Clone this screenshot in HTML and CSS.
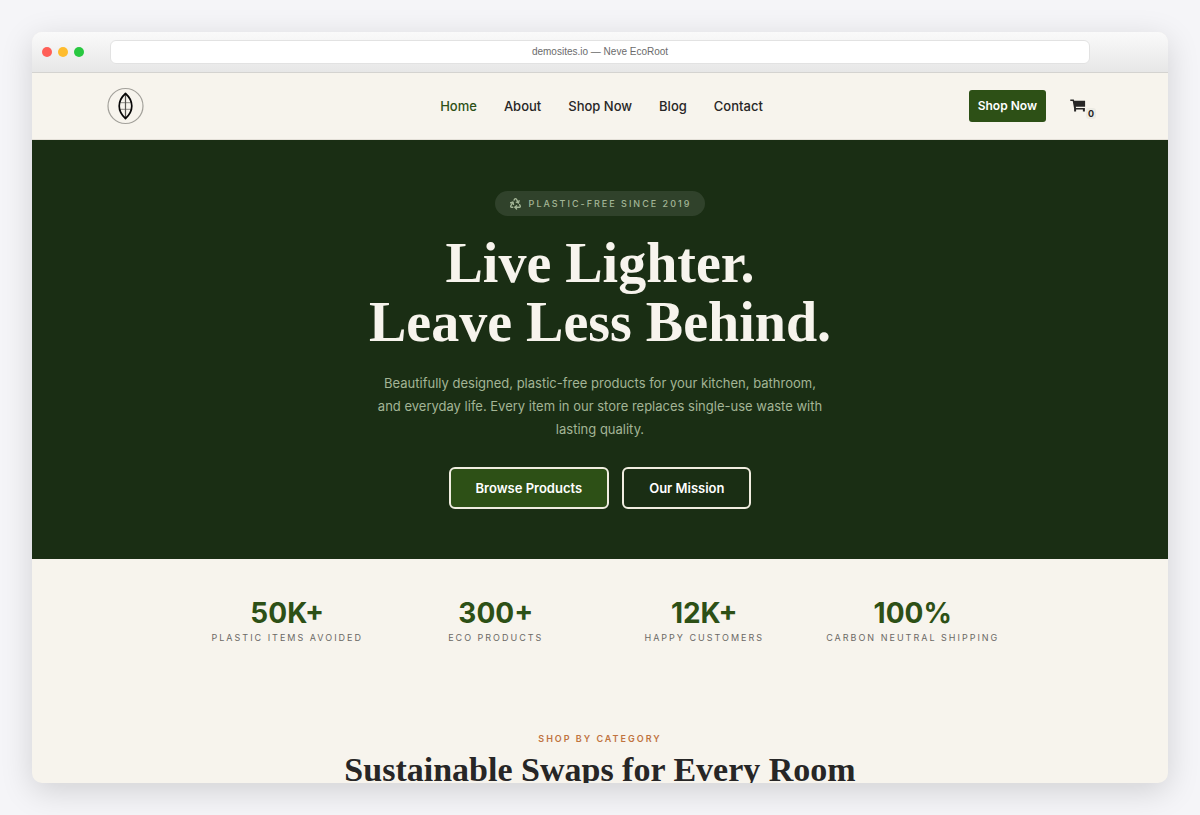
FILE: index.html
```
<!DOCTYPE html>
<html lang="en">
<head>
    <meta charset="UTF-8">
    <meta name="viewport" content="width=device-width, initial-scale=1.0">
    <title>Neve EcoRoot</title>
    <link rel="stylesheet" href="styles.css">
</head>
<body>

    <div class="browser">
        <!-- Browser bar -->
        <div class="toolbar">
            <div class="dots">
                <span class="dot red"></span>
                <span class="dot yellow"></span>
                <span class="dot green"></span>
            </div>
            <div class="address">demosites.io — Neve EcoRoot</div>
        </div>

        <!-- Header -->
        <header>
            <a class="logo" href="#" aria-label="EcoRoot home">
                <svg width="38" height="38" viewBox="0 0 38 38" fill="none">
                    <circle cx="18.500" cy="19" r="17.500" stroke="#a3a19b" stroke-width="1.2"/>
                    <path d="M12.500 15.700h12M12.500 22.300h12" stroke="#8b8983" stroke-width="1"/>
                    <path d="M18.500 7v24" stroke="#55534f" stroke-width="1.2"/>
                    <path d="M18.500 6.500C10.100 14 10.100 24 18.500 31.500C26.900 24 26.900 14 18.500 6.500Z" stroke="#080808" stroke-width="1.7" stroke-linejoin="round"/>
                </svg>
            </a>
            <nav>
                <a class="active" href="#">Home</a>
                <a href="#">About</a>
                <a href="#">Shop Now</a>
                <a href="#">Blog</a>
                <a href="#">Contact</a>
            </nav>
            <div class="actions">
                <a class="shop-btn" href="#">Shop Now</a>
                <a class="cart" href="#" aria-label="Cart">
                    <svg width="16" height="16" viewBox="0 0 16 16" fill="#272626">
                        <path d="M0.300 1.500h3.500l0.400 1.200h10.900v6H5.800l0.200 1.300h8.900v3.600h-2v-2H6.100v2h-2v-3.200L2.700 3H0.300z"/>
                    </svg>
                    <span class="count">0</span>
                </a>
            </div>
        </header>

        <!-- Hero -->
        <section class="hero">
            <p class="badge">
                <svg width="13" height="13" viewBox="0 0 24 24" fill="none" stroke="#a3b596" stroke-width="2.500" stroke-linecap="round" stroke-linejoin="round">
                    <path d="M7 19H4.815a1.830 1.830 0 0 1-1.570-.881 1.785 1.785 0 0 1-.004-1.784L7.196 9.500"/>
                    <path d="M11 19h8.203a1.830 1.830 0 0 0 1.556-.890 1.784 1.784 0 0 0 0-1.775l-1.226-2.120"/>
                    <path d="m14 16-3 3 3 3"/>
                    <path d="M8.293 13.596 7.196 9.500 3.100 10.598"/>
                    <path d="m9.344 5.811 1.093-1.892A1.830 1.830 0 0 1 11.985 3a1.784 1.784 0 0 1 1.546.888l3.943 6.843"/>
                    <path d="m13.378 9.633 4.096 1.098 1.097-4.096"/>
                </svg>
                <span>Plastic-Free Since 2019</span>
            </p>
            <h1>Live Lighter.<br>Leave Less Behind.</h1>
            <p class="intro">Beautifully designed, plastic-free products for your kitchen, bathroom, and everyday life. Every item in our store replaces single-use waste with lasting quality.</p>
            <div class="buttons">
                <a class="btn filled" href="#">Browse Products</a>
                <a class="btn" href="#">Our Mission</a>
            </div>
        </section>

        <!-- Stats -->
        <section class="stats">
            <div class="stat">
                <strong>50K+</strong>
                <span>Plastic Items Avoided</span>
            </div>
            <div class="stat">
                <strong>300+</strong>
                <span>Eco Products</span>
            </div>
            <div class="stat">
                <strong>12K+</strong>
                <span>Happy Customers</span>
            </div>
            <div class="stat">
                <strong>100%</strong>
                <span>Carbon Neutral Shipping</span>
            </div>
        </section>

        <!-- Categories -->
        <section class="categories">
            <p class="label">Shop by Category</p>
            <h2>Sustainable Swaps for Every Room</h2>
        </section>
    </div>

</body>
</html>
```
FILE: styles.css
```
* {
    box-sizing: border-box;
}

body {
    margin: 0;
    height: 100vh;
    padding: 32px;
    background: #f5f5f8;
    font-family: Inter, 'Liberation Sans', sans-serif;
    color: #272626;
}

a {
    color: inherit;
    text-decoration: none;
}

h1, h2, p {
    margin: 0;
}

.browser {
    height: 100%;
    overflow: hidden;
    border-radius: 10px;
    background: #f7f4ed;
    box-shadow: 0 8px 32px rgba(0, 0, 0, 0.15);
}

/* Browser bar */
.toolbar {
    display: flex;
    align-items: center;
    height: 41px;
    padding: 0 78px 0 10px;
    background: linear-gradient(#fafafa, #e7e7e7);
    border-bottom: 1px solid #d4d3d0;
}

.dots {
    display: flex;
    gap: 6px;
    width: 68px;
}

.dot {
    width: 10px;
    height: 10px;
    border-radius: 50%;
}

.red {
    background: #ff5f57;
}

.yellow {
    background: #febc2e;
}

.green {
    background: #28c840;
}

.address {
    flex: 1;
    border: 1px solid #e2e2e2;
    border-radius: 6px;
    background: #fff;
    color: #6b6b6b;
    font-family: 'Liberation Sans', Arial, sans-serif;
    font-size: 10px;
    line-height: 22px;
    text-align: center;
}

/* Header */
header {
    display: grid;
    grid-template-columns: 1fr auto 1fr;
    align-items: center;
    height: 67px;
    padding: 0 72px 0 75px;
    border-bottom: 1px solid #e4e0d8;
}

.logo {
    display: flex;
}

nav {
    display: flex;
    gap: 27px;
    font-size: 13px;
    font-weight: 500;
    line-height: 20px;
}

.active {
    color: #2d5016;
}

.actions {
    display: flex;
    justify-content: flex-end;
    align-items: center;
    gap: 24px;
}

.shop-btn {
    padding: 0 9px;
    border-radius: 3px;
    background: #2d5016;
    color: #fff;
    font-size: 12px;
    font-weight: 600;
    line-height: 32px;
}

.cart {
    display: flex;
    align-items: center;
}

.count {
    width: 10px;
    margin-top: 14px;
    border-radius: 3px;
    background: #ecebe4;
    font-size: 9px;
    font-weight: 700;
    line-height: 11px;
    text-align: center;
}

/* Hero */
.hero {
    display: flex;
    flex-direction: column;
    align-items: center;
    padding: 51px 24px 50px;
    background: #1a2e14;
    text-align: center;
}

.badge {
    display: flex;
    align-items: center;
    gap: 7px;
    padding: 0 14px;
    border-radius: 13px;
    background: #30422b;
    color: #a3b596;
    font-size: 9px;
    font-weight: 500;
    letter-spacing: 2px;
    line-height: 25px;
    text-transform: uppercase;
}

h1, h2 {
    font-family: Georgia, 'Liberation Serif', serif;
    font-weight: 700;
}

h1 {
    margin-top: 18px;
    color: #f7f4ed;
    font-size: 56px;
    line-height: 59px;
}

.intro {
    max-width: 454px;
    margin-top: 20px;
    color: #a3b596;
    font-size: 13px;
    line-height: 23px;
}

.buttons {
    display: flex;
    gap: 13px;
    margin-top: 26px;
}

.btn {
    padding: 0 25px;
    border: 2px solid #f0ede0;
    border-radius: 6px;
    color: #fff;
    font-size: 13px;
    font-weight: 600;
    line-height: 38px;
}

.filled {
    background: #2d5016;
}

/* Stats */
.stats {
    display: grid;
    grid-template-columns: repeat(4, 1fr);
    max-width: 834px;
    margin: 0 auto;
    padding-top: 36px;
    text-align: center;
}

.stat strong {
    display: block;
    color: #2d5016;
    font-size: 28px;
    line-height: 36px;
}

.stat span {
    display: block;
    color: #6b6965;
    font-size: 9px;
    letter-spacing: 2px;
    line-height: 14px;
    text-transform: uppercase;
    white-space: nowrap;
}

/* Categories */
.categories {
    padding-top: 87px;
    text-align: center;
}

.label {
    color: #c0733f;
    font-size: 9px;
    font-weight: 600;
    letter-spacing: 2px;
    line-height: 14px;
    text-transform: uppercase;
}

h2 {
    margin-top: 5px;
    font-size: 34px;
    line-height: 38px;
    white-space: nowrap;
}

@media (max-width: 768px) {
    nav {
        gap: 14px;
    }

    header {
        padding: 0 20px;
    }

    .stats {
        grid-template-columns: repeat(2, 1fr);
        gap: 20px;
    }

    h2 {
        white-space: normal;
    }
}
```
